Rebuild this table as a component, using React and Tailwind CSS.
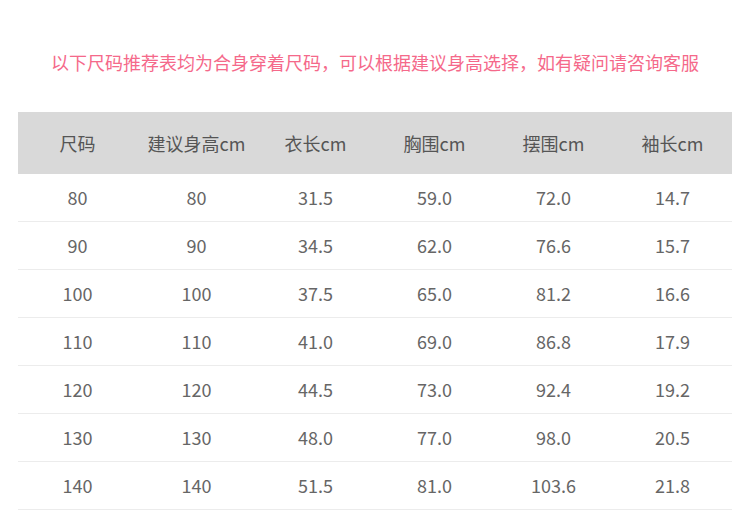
const headers = ["尺码", "建议身高cm", "衣长cm", "胸围cm", "摆围cm", "袖长cm"];

const rows = [
  ["80", "80", "31.5", "59.0", "72.0", "14.7"],
  ["90", "90", "34.5", "62.0", "76.6", "15.7"],
  ["100", "100", "37.5", "65.0", "81.2", "16.6"],
  ["110", "110", "41.0", "69.0", "86.8", "17.9"],
  ["120", "120", "44.5", "73.0", "92.4", "19.2"],
  ["130", "130", "48.0", "77.0", "98.0", "20.5"],
  ["140", "140", "51.5", "81.0", "103.6", "21.8"],
];

export default function App() {
  return (
    <div
      className="w-[750px] h-[510px] bg-white overflow-hidden"
      style={{ fontFamily: '"Noto Sans CJK SC", "Noto Sans", sans-serif' }}
    >
      {/* notice */}
      <p className="pt-[49px] h-[112px] text-center text-[18px] leading-[26px] text-[#f5698a]">
        以下尺码推荐表均为合身穿着尺码，可以根据建议身高选择，如有疑问请咨询客服
      </p>

      {/* size table */}
      <div className="ml-[18px] w-[714px]">
        <div className="grid grid-cols-6 h-[62px] bg-[#d9d9d9] items-center">
          {headers.map((h) => (
            <div key={h} className="text-center text-[18px] text-[#555]">
              {h}
            </div>
          ))}
        </div>
        {rows.map((r, i) => (
          <div
            key={i}
            className="grid grid-cols-6 h-[48px] items-center border-b border-[#ececec]"
          >
            {r.map((v, j) => (
              <div key={j} className="text-center text-[18px] text-[#666]">
                {v}
              </div>
            ))}
          </div>
        ))}
      </div>
    </div>
  );
}
